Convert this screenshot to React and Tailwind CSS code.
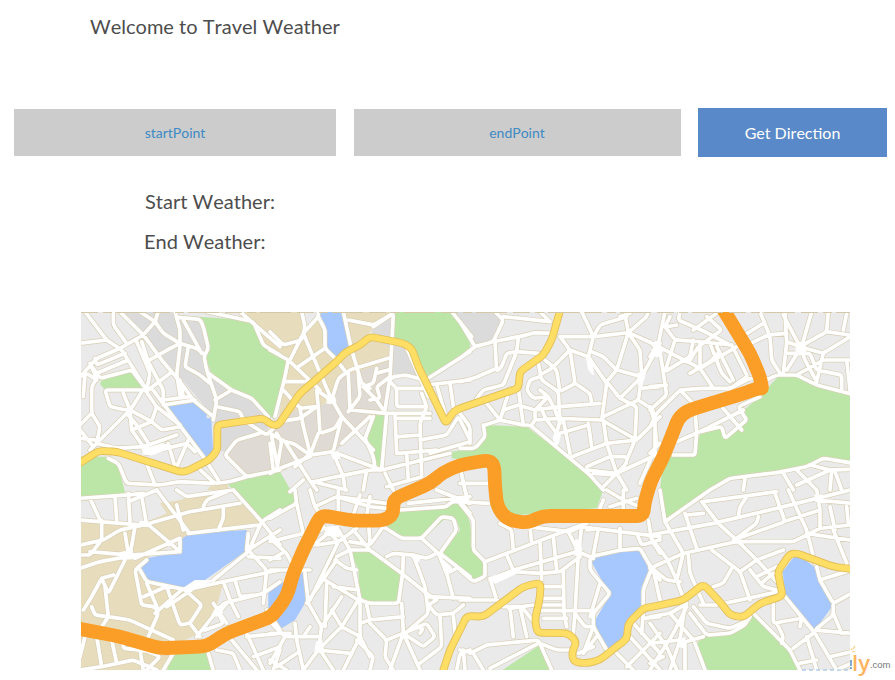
import React from "react";

// The city map is surveyed in eight sections. Each section has its own origin
// on the page and is drawn on a grid of three units to the pixel.
const ORIGIN = {
  A: [80, 310], B: [270, 310], C: [460, 310], D: [650, 310],
  G: [80, 490], H: [270, 490], I: [460, 490], J: [650, 490],
};

function project(section, points) {
  const [ox, oy] = ORIGIN[section];
  return points.trim().split(/\s+/).map((pair) => {
    const [x, y] = pair.split(",").map(Number);
    return [ox + x / 3, oy + y / 3];
  });
}

const line = (pts) => "M" + pts.map(([x, y]) => `${x.toFixed(1)} ${y.toFixed(1)}`).join("L");

// Joins points into one path whose corners are rounded with radius r.
function smooth(p, r) {
  let d = `M${p[0][0].toFixed(1)} ${p[0][1].toFixed(1)}`;
  for (let i = 1; i < p.length - 1; i++) {
    const [x, y] = p[i];
    const toward = ([a, b]) => {
      const len = Math.hypot(a - x, b - y) || 1;
      const k = Math.min(r, len / 2) / len;
      return `${(x + (a - x) * k).toFixed(1)} ${(y + (b - y) * k).toFixed(1)}`;
    };
    d += `L${toward(p[i - 1])}Q${x.toFixed(1)} ${y.toFixed(1)} ${toward(p[i + 1])}`;
  }
  const end = p[p.length - 1];
  return d + `L${end[0].toFixed(1)} ${end[1].toFixed(1)}`;
}

const route = (parts, r) => smooth(parts.flatMap(([s, pts]) => project(s, pts)), r);

const DARK = "#dbdbdb";
const STONE = "#dfdad4";
const TAN = "#e7ddbd";
const GREEN = "#bce6a8";
const BLUE = "#a7c8ff";
const GRAY = "#eaeaea";

const districts = [
  ["A", DARK, "110,5 290,5 300,20 370,30 385,120 375,150 400,200 450,240 520,265 570,320 560,375 480,390 450,430 415,420 400,320 300,200 290,195 230,130 190,75"],
  ["A", STONE, "480,390 520,370 570,380 640,370 620,480 500,500 440,430"],
  ["A", TAN, "480,15 500,0 620,0 620,150 550,105 530,40"],
  ["A", TAN, "380,540 400,520 440,520 450,540"],
  ["B", STONE, "0,365 20,330 90,290 140,290 190,270 200,205 340,150 360,160 350,300 300,330 205,415 195,425 120,430 40,480 0,490"],
  ["B", TAN, "-40,5 95,5 105,60 145,25 165,60 160,120 210,150 240,110 220,5 370,5 310,55 290,80 360,100 355,155 200,205 190,270 140,290 90,295 25,335 50,155 -30,110"],
  ["B", DARK, "305,60 360,12 365,120 310,80"],
  ["B", DARK, "365,100 410,110 438,195 365,190"],
  ["C", DARK, "-25,5 105,5 125,30 100,90 45,110"],
  ["G", TAN, "0,90 190,100 260,70 240,40 300,30 370,5 460,0 545,95 500,115 300,150 200,205 183,240 200,270 310,293 430,280 410,350 360,430 270,470 280,500 240,545 0,545"],
  ["G", GRAY, "370,50 380,28 450,0 480,36"],
  ["A", GREEN, "290,15 355,20 500,30 530,45 550,110 600,140 620,150 585,330 560,310 520,260 450,240 395,190 375,140 388,115 370,30 300,20"],
  ["A", GREEN, "65,210 152,183 195,240 75,240 60,222"],
  ["A", GREEN, "0,440 85,440 115,470 135,545 130,555 0,560"],
  ["A", GREEN, "440,520 600,485 655,580 550,630"],
  ["B", GREEN, "370,5 545,5 600,80 600,125 475,200 440,150 400,95 370,90"],
  ["B", GREEN, "315,315 345,315 335,475 315,475 315,445 285,390"],
  ["C", GREEN, "-25,425 45,415 75,390 75,345 200,350 390,495 430,540 410,595 120,620 90,460 -25,445"],
  ["D", GREEN, "370,215 385,200 440,200 500,230 610,255 610,460 520,445 470,470 380,488 240,505 180,540 120,590 45,630 30,540 40,440 135,440 150,370 215,355 225,385 290,330 275,305 330,260"],
  ["H", GREEN, "345,115 390,65 530,55 550,38 580,45 600,100 610,180 645,220 640,265 610,270 515,190 570,120 560,90 530,80 510,100 460,140 400,140"],
  ["H", GREEN, "240,180 295,180 395,255 385,335 300,335 270,325 265,240"],
  ["G", GREEN, "275,490 380,480 395,545 260,545"],
  ["I", GREEN, "120,545 240,465 278,545"],
  ["J", GREEN, "140,460 170,435 240,430 290,405 310,370 420,480 452,545 165,545"],
  ["A", BLUE, "250,290 345,272 380,310 380,325 395,325 395,350 400,430 370,443"],
  ["B", BLUE, "148,15 155,5 218,5 240,110 205,150 160,115 168,80 145,30"],
  ["G", BLUE, "300,150 330,130 500,120 495,185 375,270 345,270 310,293 200,270 183,240 200,205 300,185"],
  ["H", BLUE, "-5,300 110,242 105,340 75,390 35,415 -5,370"],
  ["I", BLUE, "390,208 470,185 540,178 567,240 545,290 545,345 510,390 490,450 440,480 400,400 450,315"],
  ["J", BLUE, "398,245 440,190 492,230 510,280 550,345 495,420 405,310"],
];

const streets = {
  A: [
    "15,5 80,90 125,120 200,240 215,235 260,295 370,440 415,510", "0,100 80,90", "100,5 100,45 140,100",
    "120,5 190,75 245,150 300,215 340,270 400,320", "180,5 225,35 190,75 120,115 50,145 10,190 0,200",
    "235,5 225,35 250,70 300,100 350,115 375,135", "285,5 300,60 300,110 290,195 300,255",
    "295,22 360,28 370,50 385,115 372,140 380,180 410,270 400,330", "310,30 365,130",
    "325,110 315,170 360,195 390,220", "385,190 455,240 515,265 565,320", "380,5 520,35 550,105 600,135",
    "480,5 600,110", "405,270 455,240", "410,290 480,305 490,330 560,375 590,345",
    "540,370 470,390 435,435 500,500 600,480", "575,380 595,480", "170,95 210,190 200,240",
    "200,155 280,110 300,100", "185,95 205,155 250,240 250,275", "45,145 50,165 135,130",
    "40,175 60,205 155,180 200,240 75,240 90,290 135,300 155,295 185,245", "50,190 145,150",
    "30,160 50,205 35,230 35,310 60,350 50,400", "0,200 20,190 50,210", "15,190 10,260", "35,310 0,345",
    "130,250 150,300 215,335 245,360 300,350", "150,300 50,400 30,420", "0,385 45,390", "0,360 40,410",
    "150,300 155,360 190,410 290,375", "140,310 170,345 205,400", "195,240 230,290 215,335 155,360",
    "230,290 300,345", "205,240 270,190", "50,400 110,415 190,410", "265,400 285,470", "325,390 290,470",
    "345,425 320,400 200,430", "85,445 115,460 140,520 240,525 300,515 400,520", "200,460 225,525",
    "350,470 405,520 450,515 500,500", "250,285 345,270", "250,270 330,260", "300,210 310,260", "190,420 265,405",
  ],
  B: [
    "95,5 105,50 95,90 40,105 0,65", "145,5 145,20 100,70 125,130 185,270", "145,20 165,60 165,115 200,150 230,190",
    "165,115 85,170", "55,150 0,120", "55,150 45,200 15,320", "55,150 150,240", "45,215 110,215",
    "40,240 90,295 140,290", "95,80 60,150", "220,5 245,120 275,220 300,235", "235,30 310,45 360,15",
    "310,50 370,10 360,200 345,300", "185,270 205,205 240,180 355,145", "235,190 240,300", "265,190 270,260 235,305",
    "320,175 310,220 280,230", "355,180 320,190", "280,230 320,270 340,300", "300,270 330,265 320,230 360,200",
    "140,240 145,290 150,370 195,355 215,320", "140,240 190,275 215,320 310,420", "90,295 100,350 120,430",
    "25,335 90,325 140,290", "0,370 45,395 70,400 120,435 190,425 215,320", "120,435 145,370",
    "120,440 30,475 0,490", "20,370 35,395 20,480", "45,395 125,520 140,540", "0,400 10,480",
    "240,300 350,310 480,310", "350,310 335,480 200,430", "310,320 285,385 310,440 315,475", "215,400 300,320",
    "335,480 540,430", "335,480 300,480 200,500 130,515", "190,430 220,500 225,540", "375,310 380,430",
    "385,380 450,375", "385,325 480,325", "360,210 370,200 410,195 460,210", "365,220 380,235 380,290 470,290",
    "380,235 470,235", "455,250 470,290 450,340 455,500", "385,430 500,420", "450,390 530,375 565,320 600,390",
    "410,115 475,260", "475,205 600,125", "470,225 600,210", "500,225 525,310", "540,220 550,290", "545,5 605,80",
    "480,430 600,395", "410,430 415,510", "350,530 455,500", "345,490 370,540", "290,480 280,540", "100,510 60,545",
    "130,515 230,540", "75,470 110,440",
  ],
  C: [
    "0,215 40,205 110,175", "105,5 130,30 100,95 45,110 0,35", "45,110 0,145", "100,95 200,75 220,68 285,70",
    "130,20 180,25 270,35", "240,5 270,35", "105,95 110,185 125,170 140,130 170,125 235,130",
    "175,85 170,125 130,225 70,240 50,265", "80,280 120,330 150,235",
    "75,345 120,330 190,345 210,345 390,495 430,540", "120,330 130,300 175,285 225,300", "175,235 190,345",
    "0,310 30,350 30,400", "70,345 75,380 45,415 0,415", "365,5 400,80 385,140 440,220 425,330",
    "300,80 400,80 505,68 600,110", "300,80 330,120 275,175 240,195", "330,120 345,220 300,245 290,180 255,150",
    "330,120 385,140", "400,80 420,45 500,20", "495,15 505,68 470,180 440,215", "505,68 560,20 565,5",
    "505,68 540,120 545,200 535,270 430,320", "395,125 430,140 470,180 545,200 600,100", "540,235 600,230",
    "440,215 480,265 530,290 525,390", "480,265 545,200", "235,160 245,210 295,245 300,330 290,370",
    "240,200 210,210 200,240 220,265 265,260 240,240", "265,260 225,300 225,330 300,325 425,330",
    "425,330 530,390 600,320", "535,270 580,300 590,400", "345,220 390,250 395,280", "300,290 420,280",
    "225,300 300,290", "240,290 260,330 290,370", "310,330 330,430", "385,340 395,410", "300,370 385,345",
    "335,440 440,400 430,330", "440,400 470,490 380,480", "380,470 450,440 500,440 500,460 470,490 430,530",
    "470,490 600,430", "440,400 530,390", "525,390 500,450", "580,430 540,520", "470,490 500,540", "0,520 85,520",
    "265,260 285,300 300,340", "400,490 470,495", "215,345 225,330", "0,470 15,540", "510,10 480,20",
  ],
  D: [
    "45,5 25,100 0,140", "0,95 30,125 50,255 0,300", "0,230 50,225", "25,110 150,175 190,235",
    "45,50 75,90 150,95 245,105", "75,90 45,185 120,140 130,90", "90,5 85,30 130,50 165,65 240,105",
    "50,50 80,45", "170,20 215,60 145,110 120,150", "130,60 200,10", "0,350 20,310 90,240 150,235 240,235 300,205 350,205",
    "90,240 140,290", "45,50 60,20", "150,175 260,110", "180,100 215,190 240,215", "200,110 250,210",
    "245,105 290,195", "260,90 340,40", "330,5 360,80 365,150 390,190", "405,5 410,100 400,190", "280,110 355,75 410,70",
    "400,15 450,110", "485,5 455,110 410,180", "410,95 450,110 530,65 535,5", "450,110 520,130 600,80",
    "530,65 600,75", "450,110 465,150 500,215", "440,195 520,150 600,150", "520,130 500,215", "590,10 580,60",
    "415,130 480,130 500,180 575,195 575,240", "590,150 600,240", "350,210 380,195 440,195 500,225 605,252",
    "215,290 275,360", "135,300 140,370 135,435 70,435", "80,395 150,365 280,300",
    "150,365 215,350 225,385 290,330 265,290 330,260", "0,430 30,400", "15,320 15,430", "0,290 15,340",
    "180,540 240,505 380,488 470,470 520,445 610,460", "480,465 540,480 610,478", "285,505 280,540",
    "400,490 430,540", "540,480 440,525", "440,480 500,540", "545,480 540,540", "555,485 575,540",
    "120,190 180,155 205,130", "235,240 290,200", "150,95 150,170",
  ],
  G: [
    "0,25 145,15 190,10", "30,25 60,90", "105,20 110,90", "145,10 150,95", "0,90 190,105 330,65 480,40",
    "145,35 230,0", "185,20 200,105", "200,100 300,185", "230,0 325,125", "290,0 320,20 460,0", "290,45 310,120",
    "370,50 380,30 440,5", "430,50 430,85 415,120", "460,0 545,95", "325,130 540,105", "0,165 70,150 120,120 190,105",
    "65,90 65,150 30,195 0,195", "30,185 150,195 300,185 300,150", "150,195 165,110", "145,190 135,130",
    "165,205 300,145", "0,235 60,215 140,200", "135,210 85,310 65,265 35,320 10,360", "65,265 100,255",
    "75,290 85,380 65,410", "35,350 45,375 85,380 150,390 280,450", "200,210 165,240 185,345 225,350 235,370 205,440",
    "180,240 200,275 320,300 430,275 600,240", "190,320 260,290 300,405 330,400 365,345 310,295 225,370",
    "200,280 235,360", "260,350 320,310", "330,400 360,440", "350,440 430,340 550,310 600,275",
    "430,275 450,330 475,380", "400,270 505,185 545,95 600,60", "545,95 600,165", "505,180 560,240 550,340",
    "505,130 500,180", "505,180 600,120", "505,200 600,205", "375,420 430,400 415,370 440,340",
    "465,270 480,320 520,315", "400,340 440,400", "0,500 15,440", "50,440 65,530 0,540",
    "65,530 160,510 230,540", "95,450 110,520", "130,460 130,475 270,490", "180,480 190,540",
    "195,480 240,500 200,540", "280,490 250,540", "385,490 400,540", "410,480 460,490 480,540",
    "455,450 530,540", "500,430 550,540", "500,440 600,430", "560,360 600,420", "600,480 580,540", "520,500 600,470",
  ],
  H: [
    "75,0 80,40 0,85", "80,40 100,130 0,155", "0,145 50,190 70,230", "0,210 45,185", "0,240 120,240",
    "120,0 135,50 200,20 350,40", "135,50 150,70", "205,0 205,70", "200,20 300,50 350,55", "270,15 250,75",
    "300,20 290,75", "390,60 530,50 545,35 570,35 600,70", "415,40 600,20", "500,0 600,40",
    "130,165 200,110 240,180", "100,135 155,120", "155,105 205,155", "140,165 205,155 260,115",
    "205,155 120,330", "240,155 300,165 340,110", "250,120 300,180", "295,90 300,160",
    "240,180 300,180 395,250 470,310 500,330", "240,180 270,330 300,340 385,340 398,250",
    "340,110 395,145 455,145 515,80 550,85 560,120 510,190 600,260", "455,145 505,190 530,250",
    "350,200 370,190 430,195 470,205 500,190", "400,195 398,250", "430,195 465,290 475,370 405,430",
    "530,250 560,235", "530,250 550,325", "105,250 115,340 155,410 145,480", "195,210 230,235 260,240",
    "165,270 265,330", "200,200 240,180", "170,280 165,410", "265,300 190,290", "215,320 155,410", "185,360 215,410 265,330",
    "110,340 200,210", "270,330 270,440 300,500", "290,345 300,390 400,380", "270,400 300,390",
    "395,340 400,430 450,540", "400,430 360,540", "350,450 400,430 470,400 495,440 460,470 400,430",
    "300,400 350,450 345,500 370,540", "470,320 600,325", "475,345 500,375 550,370 580,345", "510,380 515,470 450,520",
    "150,440 45,440 0,395", "75,400 80,450 100,540", "45,440 0,520", "145,480 215,410 270,440 220,540",
    "145,480 100,540", "145,480 240,490", "0,430 60,430", "260,450 310,500 300,540", "550,375 555,430",
    "560,540 570,490 600,480", "430,410 460,415 450,430", "80,490 20,530", "500,330 475,345", "150,480 190,540",
    "120,410 100,440", "0,510 50,540",
  ],
  I: [
    "0,35 85,40", "15,0 25,40", "0,40 40,90 40,180 75,215 75,260 40,275 0,240", "75,215 310,125 380,100",
    "120,100 155,120 160,180", "210,110 215,160", "220,112 330,125 360,110 600,140", "140,195 160,240",
    "240,155 245,270", "90,270 160,240 350,185", "90,265 110,330 0,330", "160,245 240,250 300,245 360,200",
    "280,140 290,240", "325,125 355,185", "365,110 355,190 345,370", "380,120 415,115 400,195", "355,185 400,205",
    "390,200 480,180 540,175 575,235 600,270", "480,115 480,180", "530,130 545,165 600,150", "565,90 575,150 600,190",
    "310,240 312,370 320,410", "255,290 310,290", "250,325 310,325", "250,345 310,345", "245,362 400,362", "250,385 320,385",
    "110,330 150,355 160,440", "150,355 220,345", "180,350 200,440", "130,350 185,350 225,400",
    "30,490 80,465 235,450 275,540", "40,490 70,540", "90,535 235,460", "10,480 15,540", "0,480 40,490",
    "390,210 390,240 450,310 400,370 400,410 440,480", "420,280 390,380", "345,370 375,410 400,410 370,490",
    "345,370 340,430", "410,440 370,490", "240,460 290,480 330,480", "355,490 400,470", "575,235 550,300 550,345",
    "550,385 600,380", "520,400 600,490", "510,440 600,540", "600,430 500,530", "550,360 545,430", "470,490 520,540",
    "430,30 420,55", "440,0 490,30 540,50", "490,0 490,60", "450,50 530,25",
  ],
  J: [
    "30,0 45,95 180,0", "0,135 190,100 380,55 600,0", "0,140 50,205 80,270 110,350", "45,95 100,190 80,270",
    "105,70 140,175", "155,35 205,100 265,155 330,220", "110,75 160,70", "0,235 100,190 260,155 430,155 510,115 600,105",
    "115,195 120,250 160,340", "0,230 50,270 90,275", "10,240 30,330", "185,180 270,245 300,330",
    "245,235 220,280 190,290", "270,245 320,210 400,180", "150,345 200,345 385,305", "290,20 270,50 265,80",
    "160,35 270,20 380,5", "375,10 405,95 250,150", "325,80 320,100 260,145", "415,0 470,120 495,220",
    "470,130 600,150", "500,0 510,60 510,115", "540,50 555,120", "510,60 400,95", "500,30 605,40",
    "550,120 590,220", "300,240 340,290 380,300", "330,220 385,280", "320,260 380,230", "340,275 370,250",
    "500,230 510,270 605,240", "510,270 550,340 605,310", "550,345 550,375 495,420 605,430", "550,370 575,430",
    "405,320 495,430 560,540", "370,335 370,400 455,385", "455,385 450,410", "310,370 420,480 450,540",
    "380,400 400,440 395,460", "430,475 490,430", "450,520 500,510", "470,440 500,540", "540,500 605,485",
    "570,535 605,520", "0,380 60,370 110,340", "60,370 130,450", "105,345 90,450 60,540", "0,460 90,450",
    "0,400 50,470 80,540", "0,540 70,430 110,350", "130,350 170,400 240,415 285,395", "120,370 170,435 240,430 285,405 300,380",
    "90,460 160,440", "135,460 165,540", "0,520 40,500", "590,50 595,100", "105,460 105,540",
  ],
};

const streetPath = Object.entries(streets)
  .flatMap(([section, list]) => list.map((pts) => smooth(project(section, pts), 3)))
  .join("");

// Squares and wide junctions, drawn as open white space.
const squares = [
  ["A", "190,418 250,400 262,418 215,435 190,432"],
  ["C", "285,368 303,368 296,395 288,412 280,385"],
  ["C", "585,95 600,92 600,135 588,130"],
  ["C", "535,190 558,185 545,230 535,225"],
  ["C", "380,145 398,165 400,195 386,180"],
  ["D", "5,120 22,100 40,122 28,140 10,138"],
  ["D", "440,98 465,96 468,132 438,135"],
  ["B", "172,262 195,262 198,280 172,280"],
  ["B", "183,428 205,425 210,445 192,448"],
  ["G", "120,188 155,180 162,206 125,208"],
  ["G", "310,295 345,272 400,272 350,292 325,312"],
  ["G", "410,350 430,345 425,378 395,378"],
  ["G", "180,95 200,92 202,110 178,108"],
  ["H", "170,112 205,108 208,140 165,135"],
  ["H", "140,455 155,450 162,488 135,488"],
  ["H", "510,200 545,235 525,248"],
  ["H", "425,198 452,205 440,222"],
  ["I", "90,262 160,240 170,250 105,280"],
  ["I", "348,150 362,150 365,195 345,195"],
  ["J", "495,15 520,15 515,35 498,35"],
  ["J", "85,445 105,445 105,475 88,470"],
  ["J", "0,225 18,230 5,250"],
];

const yellowRoutes = [
  route([
    ["A", "-10,465 55,423 110,425 300,485 320,484 390,448 412,420 412,345 550,325 575,345"],
    ["B", "25,345 90,250 200,155 225,128 270,105 300,80 400,100 425,115 445,170 528,340 550,305"],
    ["C", "0,295 175,235 180,185 250,135 275,90 302,-5"],
  ], 4),
  route([
    ["H", "515,555 540,480 575,410"],
    ["I", "20,378 70,380 190,290 242,278 240,320 225,390 232,428 325,430 350,455 335,490 342,516 380,520 420,510 475,465 500,448 505,400 550,355"],
    ["J", "0,352 100,330 160,283 210,335 240,375 280,382 330,340 398,318 383,245 420,192 440,190 550,230 610,238"],
  ], 5),
];

const orangeRoute = [
  route([["D", "218,-5 300,130 330,200 335,229"]], 8),
  route([
    ["D", "335,235 320,236 275,252 200,275 110,303 85,325 70,365 40,440"],
    ["C", "572,515"],
    ["I", "553,40 550,78 400,78 250,78 200,99 140,88 112,50 105,-10"],
    ["C", "103,465 85,450 0,465"],
    ["B", "520,487 480,520"],
    ["H", "370,28 370,75 340,92 250,92 170,78 150,80 100,180 70,250 50,320 5,380"],
    ["G", "440,430 380,469 240,475 120,440 -10,415"],
  ], 7),
];

function CityMap() {
  return (
    <svg viewBox="81 312 769 358" className="block h-[358px] w-[769px] bg-[#eaeaea]">
      {districts.map(([section, fill, pts], i) => (
        <path key={i} d={line(project(section, pts)) + "Z"} fill={fill} />
      ))}
      <g fill="none" strokeLinejoin="round" strokeLinecap="round">
        <path d={streetPath} stroke="#d8cfb6" strokeWidth="5.1" />
        <path d={streetPath} stroke="#ffffff" strokeWidth="3.7" />
        {squares.map(([section, pts], i) => (
          <path key={i} d={line(project(section, pts)) + "Z"} fill="#ffffff" stroke="#ffffff" strokeWidth="1" />
        ))}
        {yellowRoutes.map((d, i) => (
          <g key={i}>
            <path d={d} stroke="#e3bf58" strokeWidth="7.8" />
            <path d={d} stroke="#ffde66" strokeWidth="6" />
          </g>
        ))}
        {orangeRoute.map((d, i) => (
          <path key={i} d={d} stroke="#fb9e27" strokeWidth="13.8" />
        ))}
      </g>
      <path d="M81 312.5H850" stroke="#d3c9a8" strokeWidth="1" strokeDasharray="17 5 9 4 31 6" />
    </svg>
  );
}

function Watermark() {
  return (
    <div className="absolute right-0 bottom-0 flex h-[36px] w-[47px] items-start">
      <svg viewBox="848 644 7 36" className="h-[36px] w-[7px] shrink-0 overflow-visible" fill="none">
        <path d="M851 648.5l1 1.5M855 646l-2 3M852 652l3-1" stroke="#ffcf80" strokeWidth="1.3" />
        <path d="M851 660v9" stroke="#4d86c6" strokeWidth="1.4" strokeDasharray="6 1" />
        <path d="M802 670h48" stroke="#8fb8e0" strokeWidth="1" strokeDasharray="4 3" />
      </svg>
      <span className="-ml-[3px] pt-[5px] font-['Open_Sans',sans-serif] text-[22px] leading-[26px] font-semibold text-[#fdb45f]">ly</span>
      <span className="pt-[15px] font-['Liberation_Sans',sans-serif] text-[9.5px] leading-[12px] text-[#777777]">.com</span>
    </div>
  );
}

export default function App() {
  return (
    <main className="relative flex h-[680px] w-[895px] flex-col overflow-hidden bg-white font-[Lato,sans-serif] text-[#4d4d4d] [font-kerning:none]">
      <h1 className="h-[108px] pt-[13px] pl-[90px] text-[20px] leading-[26px]">Welcome to Travel Weather</h1>
      <div className="flex h-[49px] items-center gap-[17.5px] pr-2 pl-[14px]">
        <div className="flex h-[47px] w-[322px] items-center justify-center bg-[#cccccc] text-[14px] text-[#3d8ac4]">
          startPoint
        </div>
        <div className="flex h-[47px] w-[327px] items-center justify-center bg-[#cccccc] text-[14px] text-[#3d8ac4]">
          endPoint
        </div>
        <button className="h-full flex-1 bg-[#5989c8] text-[16px] text-white">Get Direction</button>
      </div>
      <section className="flex h-[155px] flex-col gap-[14px] pt-[31px] pl-36 text-[20px] leading-[26px]">
        <p className="pl-px">Start Weather:</p>
        <p>End Weather:</p>
      </section>
      <div className="pl-[81px]">
        <CityMap />
      </div>
      <Watermark />
    </main>
  );
}
